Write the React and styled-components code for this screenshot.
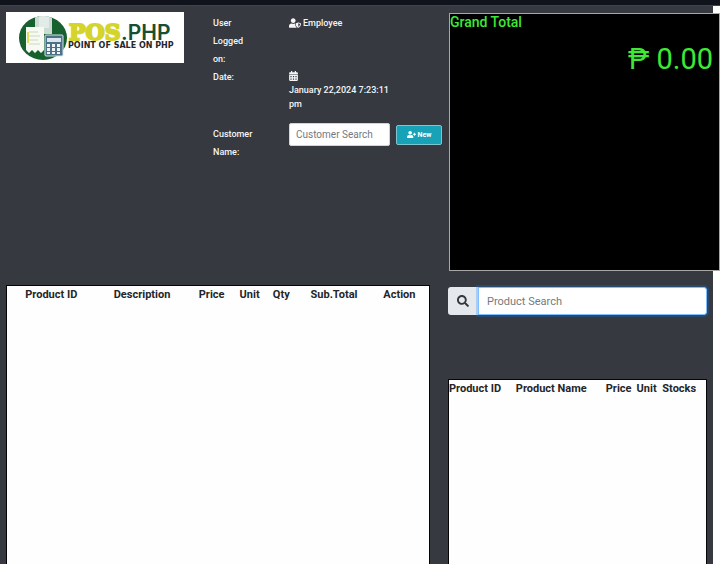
import React from "react";
import styled, { createGlobalStyle } from "styled-components";
import { FaUserShield, FaCalendarAlt, FaUserPlus, FaSearch } from "react-icons/fa";

const GlobalStyle = createGlobalStyle`
  *, *::before, *::after { box-sizing: border-box; }
  body {
    margin: 0;
    background: #ffffff;
    color: #f4f5f7;
    font-family: Roboto, "Liberation Sans", sans-serif;
    font-size: 9px;
    font-weight: 500;
  }
`;

const Page = styled.div`
  display: flex;
  flex-direction: column;
  min-height: 100vh;
`;

const TopBar = styled.header`
  height: 6px;
  background: #11131c;
  border-bottom: 1px solid #40434b;
`;

const Workspace = styled.main`
  flex: 1;
  display: grid;
  grid-template-columns: 424fr 259fr;
  column-gap: 18px;
  margin-right: 7px;
  padding: 0 6px;
  background: #363940;
`;

const Column = styled.section`
  display: flex;
  flex-direction: column;
  min-width: 0;
  padding-top: ${(p) => p.$top}px;
`;

const SaleHeader = styled.div`
  display: flex;
  align-items: flex-start;
  gap: 29px;
  min-height: 279px;
  margin-right: -12px;
`;

const Logo = styled.svg`
  flex: none;
  width: 178px;
  height: 51px;
  margin-top: 6px;
  background: #ffffff;
`;

const Details = styled.div`
  flex: 1;
  display: grid;
  grid-template-columns: 44px minmax(0, 1fr);
  column-gap: 32px;
  padding-top: 8px;
`;

const Label = styled.label`
  padding-top: ${(p) => p.$top || 0}px;
  line-height: 18px;
`;

const Value = styled.div`
  display: flex;
  align-items: ${(p) => (p.$stacked ? "flex-start" : "center")};
  flex-direction: ${(p) => (p.$stacked ? "column" : "row")};
  gap: ${(p) => (p.$stacked ? 2 : 2)}px;
  height: ${(p) => (p.$stacked ? 55 : 18)}px;
  padding-top: ${(p) => (p.$stacked ? 3 : 0)}px;
  max-width: 110px;
  line-height: 14px;

  svg { flex: none; }
`;

const CalendarIcon = styled(FaCalendarAlt)`
  width: 9px;
  height: 10px;
`;

const CustomerRow = styled.div`
  display: flex;
  align-items: center;
  gap: 6px;
  height: 23px;
`;

const CustomerInput = styled.input`
  flex: 1;
  min-width: 0;
  height: 23px;
  padding: 0 6px;
  border: 1px solid #ced4da;
  border-radius: 2px;
  background: #ffffff;
  color: #495057;
  font: 10px Roboto, sans-serif;

  &::placeholder { color: #75797f; }
`;

const NewButton = styled.button`
  display: flex;
  align-items: center;
  justify-content: center;
  gap: 2px;
  width: 46px;
  height: 20px;
  padding: 0;
  border: 1px solid #7fc5d0;
  border-radius: 2px;
  background: #17a2b8;
  color: #ffffff;
  font: bold 7px Roboto, sans-serif;
`;

const TotalPanel = styled.div`
  height: 258px;
  margin: 0 -13px 0 1px;
  border: 1px solid #a5a7a8;
  background: #000000;
  color: #3fe836;
`;

const TotalTitle = styled.h1`
  margin: 0;
  font-size: 14px;
  font-weight: 500;
  line-height: 16px;
`;

const TotalAmount = styled.p`
  margin: 12px 6px 0 0;
  font-size: 29px;
  font-weight: 400;
  line-height: 34px;
  text-align: right;
`;

const SearchGroup = styled.div`
  display: flex;
  height: 28px;
  margin: 16px 0 64px;
`;

const SearchIconBox = styled.label`
  display: flex;
  align-items: center;
  justify-content: center;
  width: 30px;
  border-radius: 3px 0 0 3px;
  background: #e5e9ed;
  color: #34393e;
`;

const ProductInput = styled.input`
  flex: 1;
  min-width: 0;
  padding: 0 8px;
  border: 1px solid #80bdff;
  border-radius: 0 3px 3px 0;
  outline: none;
  box-shadow: 0 0 0 2px rgba(0, 123, 255, 0.25);
  background: #ffffff;
  color: #495057;
  font: 11px Roboto, sans-serif;

  &::placeholder { color: #75797f; }
`;

const TableFrame = styled.div`
  flex: 1;
  border: 1px solid #050507;
  border-bottom: 0;
  background: #fefefe;
`;

const Table = styled.table`
  width: 100%;
  border-collapse: collapse;
  table-layout: fixed;
  color: #24262a;
  font-size: 11px;
  line-height: 18px;
`;

const HeadCell = styled.th`
  width: ${(p) => p.$share}%;
  padding: 0;
  font-weight: bold;
  text-align: ${(p) => p.$align || "center"};
  white-space: nowrap;
`;

const cartColumns = [
  ["Product ID", 21],
  ["Description", 22],
  ["Price", 11],
  ["Unit", 7],
  ["Qty", 8],
  ["Sub.Total", 17],
  ["Action", 14],
];

const productColumns = [
  ["Product ID", 26],
  ["Product Name", 35],
  ["Price", 12],
  ["Unit", 10],
  ["Stocks", 17],
];

function BrandLogo() {
  return (
    <Logo viewBox="0 0 178 51" role="img" aria-label="POS.PHP Point of sale on PHP">
      <defs>
        <clipPath id="disc"><ellipse cx="37" cy="26" rx="24" ry="22" /></clipPath>
      </defs>
      <ellipse cx="37" cy="26" rx="24" ry="22" fill="#17612f" />
      <g clipPath="url(#disc)">
        <path d="M29 2h17v20H29z" fill="#cddbd5" />
        <path d="M33 4h10v12H33z" fill="#e2ebe7" />
        <path d="M20 15h18v23l-3 3-3-3-3 3-3-3-3 3-3-3z" fill="#f6faf3" />
        <path d="M23 20h9M23 24h11M23 28h9M23 32h11" stroke="#ced8bd" strokeWidth="1" />
        <path d="M22 20v11" stroke="#dce05d" strokeWidth="2" />
      </g>
      <rect x="39" y="23" width="18" height="21" rx="1" fill="#4c7188" stroke="#d5e5e9" />
      <rect x="41" y="26" width="14" height="4" fill="#d8e8ed" />
      <path d="M41 32h3v3h-3zM46 32h3v3h-3zM51 32h3v3h-3zM41 36h3v3h-3zM46 36h3v3h-3zM51 36h3v3h-3zM41 40h3v2h-3zM46 40h3v2h-3zM51 40h3v2h-3z" fill="#eef4f4" />
      <text x="63" y="28" fill="#d5d42c" stroke="#d5d42c" strokeWidth="2" fontFamily="DejaVu Serif" fontWeight="bold" fontSize="22">POS</text>
      <text x="115" y="28" fill="#174f30" fontFamily="Inter" fontWeight="600" fontSize="21">.PHP</text>
      <text x="62" y="36" fill="#25272a" fontFamily="DejaVu Sans" fontWeight="bold" fontSize="8">POINT OF SALE ON PHP</text>
    </Logo>
  );
}

function HeaderRow({ columns, align }) {
  return (
    <Table>
      <thead>
        <tr>
          {columns.map(([name, share]) => (
            <HeadCell key={name} scope="col" $share={share} $align={align}>{name}</HeadCell>
          ))}
        </tr>
      </thead>
    </Table>
  );
}

export default function App() {
  return (
    <>
      <GlobalStyle />
      <Page>
        <TopBar />
        <Workspace>
          <Column $top={0}>
            <SaleHeader>
              <BrandLogo />
              <Details>
                <Label as="span">User Logged on:</Label>
                <Value><FaUserShield size={12} />Employee</Value>
                <Label as="span">Date:</Label>
                <Value $stacked>
                  <CalendarIcon />
                  <span>January 22,2024 7:23:11 pm</span>
                </Value>
                <Label htmlFor="customer" $top={2}>Customer Name:</Label>
                <CustomerRow>
                  <CustomerInput id="customer" placeholder="Customer Search" />
                  <NewButton type="button"><FaUserPlus size={9} />New</NewButton>
                </CustomerRow>
              </Details>
            </SaleHeader>
            <TableFrame>
              <HeaderRow columns={cartColumns} />
            </TableFrame>
          </Column>
          <Column $top={7}>
            <TotalPanel>
              <TotalTitle>Grand Total</TotalTitle>
              <TotalAmount>₱ 0.00</TotalAmount>
            </TotalPanel>
            <SearchGroup>
              <SearchIconBox htmlFor="product" aria-label="Product Search"><FaSearch size={12} /></SearchIconBox>
              <ProductInput id="product" placeholder="Product Search" />
            </SearchGroup>
            <TableFrame>
              <HeaderRow columns={productColumns} align="left" />
            </TableFrame>
          </Column>
        </Workspace>
      </Page>
    </>
  );
}
